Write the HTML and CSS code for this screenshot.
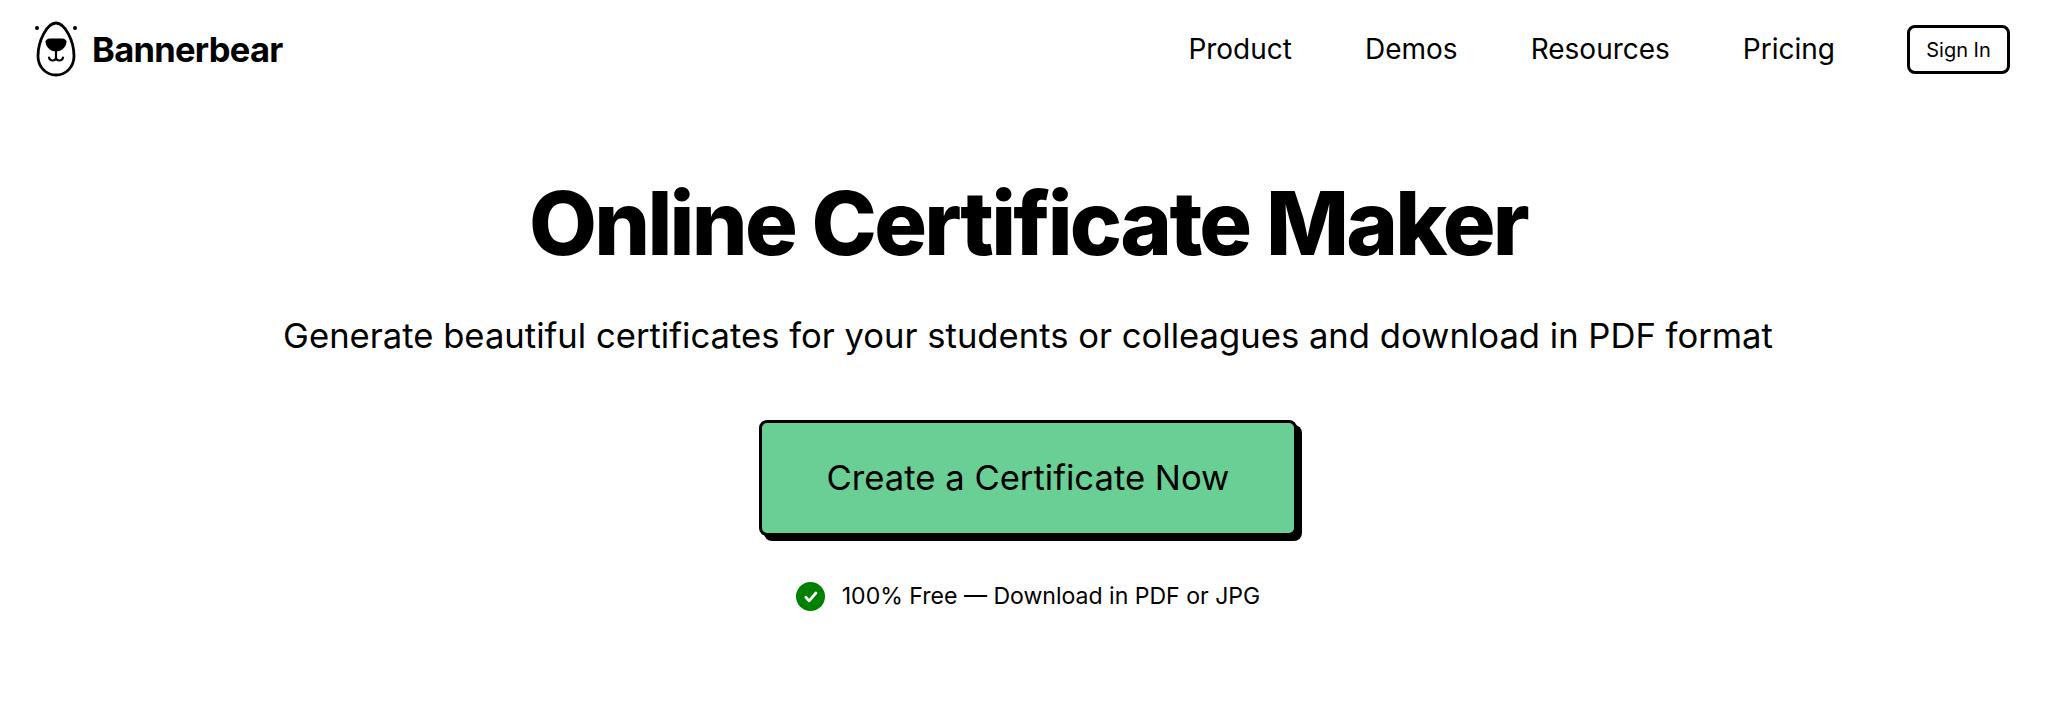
FILE: index.html
```html
<!DOCTYPE html>
<html lang="en">
<head>
<meta charset="utf-8">
<title>Online Certificate Maker</title>
<link rel="stylesheet" href="styles.css">
</head>
<body>
<header class="topbar">
  <a class="brand" href="#">
    <svg class="brand-icon" viewBox="0 0 44 56" width="44" height="56" aria-hidden="true">
      <circle cx="3" cy="7" r="2" fill="#000"/>
      <circle cx="41" cy="7" r="2" fill="#000"/>
      <path d="M22 2C13 2 4 20 4 35c0 11 8 19 18 19s18-8 18-19C40 20 31 2 22 2z" fill="none" stroke="#000" stroke-width="2.800"/>
      <path d="M11.500 20.500c0-1.500 2-3 4.500-3h12c2.500 0 4.500 1.500 4.500 3 0 5.500-5 10-10.500 10s-10.500-4.500-10.500-10z" fill="#000"/>
      <path d="M22 30v6.500c0 2-1.500 3-3.500 3s-3-1-3.500-3M22 36.500c0 2 1.500 3 3.500 3s3-1 3.500-3" fill="none" stroke="#000" stroke-width="2.200" stroke-linecap="round"/>
    </svg>
    <span class="brand-name">Bannerbear</span>
  </a>
  <nav class="nav">
    <a href="#">Product</a>
    <a href="#">Demos</a>
    <a href="#">Resources</a>
    <a href="#">Pricing</a>
    <a class="signin" href="#">Sign In</a>
  </nav>
</header>
<main class="hero">
  <h1>Online Certificate Maker</h1>
  <p class="lead">Generate beautiful certificates for your students or colleagues and download in PDF format</p>
  <a class="cta" href="#">Create a Certificate Now</a>
  <p class="note">
    <svg class="check" viewBox="0 0 28 28" width="29" height="29" aria-hidden="true">
      <circle cx="14" cy="14" r="14" fill="#008000"/>
      <path d="M9.500 14.800l3.200 3.400 6.500-7.600" fill="none" stroke="#fff" stroke-width="2.700" stroke-linecap="round" stroke-linejoin="round"/>
    </svg>
    <span>100% Free — Download in PDF or JPG</span>
  </p>
</main>
</body>
</html>
```
FILE: styles.css
```css
* { box-sizing: border-box; }
html, body { margin: 0; padding: 0; }
body {
  background: #fff;
  color: #000;
  font-family: Inter, "Liberation Sans", sans-serif;
  height: 716px;
  overflow: hidden;
}
a { color: inherit; text-decoration: none; }
.topbar {
  display: flex;
  align-items: center;
  justify-content: space-between;
  height: 98px;
  padding: 0 38px 0 34px;
}
.brand { display: flex; align-items: center; gap: 14px; }
.brand-icon { display: block; }
.brand-name { font-size: 34.500px; font-weight: 650; letter-spacing: -0.7px; }
.nav { display: flex; align-items: center; gap: 73px; font-size: 28px; font-weight: 400; }
.signin {
  display: block;
  width: 103px;
  height: 49px;
  margin-left: -1px;
  line-height: 45px;
  text-align: center;
  border: 3px solid #000;
  border-radius: 8px;
  font-size: 20px;
}
.hero { display: flex; flex-direction: column; align-items: center; padding-left: 8px; }
h1 {
  margin: 81px 0 0;
  font-size: 88px;
  line-height: 1;
  font-weight: 800;
  letter-spacing: -2.750px;
}
.lead { margin: 49px 0 0; font-size: 34.640px; line-height: 39px; font-weight: 400; }
.cta {
  display: block;
  margin-top: 65px;
  width: 538px;
  height: 116px;
  line-height: 109px;
  text-align: center;
  background: #6acf95;
  border: 3px solid #000;
  border-radius: 8px;
  box-shadow: 5px 5px 0 #000;
  font-size: 34.640px;
}
.note { display: flex; align-items: center; gap: 17px; margin: 45px 0 0; font-size: 23.050px; line-height: 30px; }
.check { display: block; }
```
